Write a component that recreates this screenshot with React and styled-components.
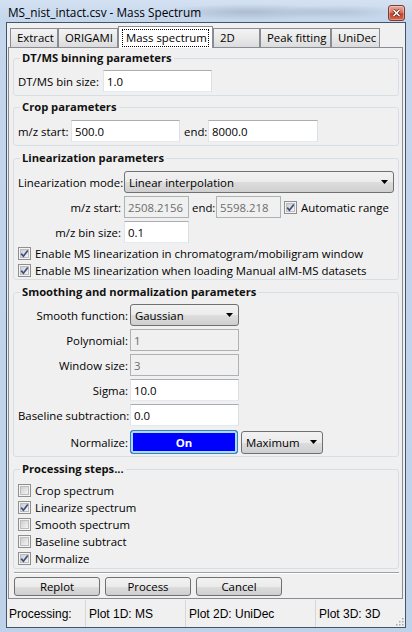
import React from 'react';
import styled, { createGlobalStyle } from 'styled-components';

const UI_FONT = `'Open Sans', 'Noto Sans', sans-serif`;
const FS = '11.4px';

const GlobalStyle = createGlobalStyle`
  html, body {
    margin: 0;
    padding: 0;
  }
  body {
    width: 412px;
    height: 632px;
    overflow: hidden;
    font-family: ${UI_FONT};
    font-size: ${FS};
    color: #000;
  }
  * {
    box-sizing: border-box;
  }
`;

const Window = styled.div`
  width: 412px;
  height: 632px;
  display: flex;
  flex-direction: column;
  padding: 0 6px 4px 6px;
  background:
    radial-gradient(ellipse 90px 8px at 250px 12px, rgba(120, 130, 145, 0.35), transparent),
    radial-gradient(ellipse 60px 7px at 340px 12px, rgba(120, 130, 145, 0.25), transparent),
    linear-gradient(to bottom, #d3e1f2 0, #c3d6ec 22px, #bed2ea 100%);
`;

const TitleBar = styled.div`
  height: 22px;
  flex: none;
  display: flex;
  align-items: flex-start;
  justify-content: space-between;
  padding: 4px 1px 0 2px;
`;

const TitleText = styled.span`
  font-size: 11.8px;
  line-height: 16px;
  color: #000;
`;

const CloseButton = styled.div`
  width: 17px;
  height: 16px;
  margin-top: 1px;
  border: 1px solid #7b3b32;
  border-radius: 3px;
  background: linear-gradient(to bottom, #e9a99a 0, #d97763 45%, #c4422b 55%, #d2664c 100%);
  box-shadow: inset 0 0 0 1px rgba(255, 255, 255, 0.35);
  display: flex;
  align-items: center;
  justify-content: center;
`;

const Client = styled.div`
  flex: 1;
  display: flex;
  flex-direction: column;
  background: #f0f0f0;
  border: 1px solid #44546a;
`;

const Notebook = styled.div`
  flex: 1;
  display: flex;
  flex-direction: column;
  margin: 3px 2px 1px 1px;
`;

const TabStrip = styled.div`
  height: 21px;
  flex: none;
  display: flex;
  align-items: flex-end;
  padding-left: 2px;
`;

const Tab = styled.div`
  position: relative;
  width: ${p => p.$w}px;
  height: ${p => (p.$active ? 22 : 19)}px;
  margin-bottom: ${p => (p.$active ? -1 : 0)}px;
  padding: ${p => (p.$active ? '2px 3px 0 3px' : '1px 0 0 6px')};
  border: 1px solid #898c95;
  border-bottom: none;
  background: ${p =>
    p.$active ? '#ffffff' : 'linear-gradient(to bottom, #f3f3f3 0, #e9e9e9 50%, #dcdcdc 100%)'};
  font-size: ${FS};
  line-height: 16px;
  white-space: nowrap;
`;

const FocusRect = styled.span`
  display: block;
  border: 1px dotted #000;
  padding: 0 3px;
  text-align: center;
`;

const Page = styled.div`
  flex: 1;
  display: flex;
  flex-direction: column;
  border: 1px solid #898c95;
  padding: 2px 3px 0 4px;
`;

const GroupBox = styled.fieldset`
  margin: ${p => p.$mt || 0}px 0 0 0;
  padding: ${p => p.$pt || 4}px 4px ${p => p.$pb || 0}px 4px;
  border: 1px solid #d5dfe5;
  border-radius: 3px;
  min-width: 0;
`;

const Legend = styled.legend`
  margin-left: 2px;
  padding: 0 2px;
  font-weight: 700;
  font-size: 11.2px;
  line-height: 16px;
  color: #111;
`;

const Rows = styled.div`
  display: flex;
  flex-direction: column;
  gap: ${p => p.$gap || 0}px;
  margin-top: ${p => p.$mt || 0}px;
`;

const Row = styled.div`
  display: flex;
  align-items: center;
  height: ${p => p.$h || 22}px;
`;

const Label = styled.span`
  flex: none;
  width: ${p => p.$w}px;
  text-align: ${p => p.$align || 'left'};
  padding-right: ${p => p.$pr || 0}px;
  padding-left: ${p => p.$pl || 0}px;
  font-size: ${FS};
  white-space: nowrap;
`;

const TextInput = styled.input`
  flex: none;
  width: ${p => p.$w}px;
  height: 22px;
  margin: 0;
  padding: 0 0 0 3px;
  border: 1px solid;
  border-color: ${p => (p.disabled ? '#adb2b5' : '#abadb3 #dbdfe6 #e3e9ef #e2e3ea')};
  background: ${p => (p.disabled ? '#f0f0f0' : '#ffffff')};
  color: ${p => (p.disabled ? '#6d6d6d' : '#000')};
  font-family: ${UI_FONT};
  font-size: ${FS};
  outline: none;
`;

const Dropdown = styled.div`
  flex: none;
  width: ${p => p.$w}px;
  height: ${p => p.$h || 22}px;
  display: flex;
  align-items: center;
  justify-content: space-between;
  padding: 0 5px 0 4px;
  border: 1px solid #707070;
  border-radius: 3px;
  background: linear-gradient(to bottom, #f2f2f2 0, #ebebeb 50%, #dddddd 51%, #cfcfcf 100%);
  font-size: ${FS};
  white-space: nowrap;
`;

const Toggle = styled.div`
  flex: none;
  width: ${p => p.$w}px;
  height: 24px;
  display: flex;
  align-items: center;
  justify-content: center;
  border: 1px solid #3c7fb1;
  border-radius: 3px;
  background: #0000ff;
  box-shadow: inset 0 0 0 2px #a8dcf6;
  color: #fff;
  font-weight: 700;
  font-size: ${FS};
`;

const CheckRow = styled.label`
  display: flex;
  align-items: center;
  height: 17px;
  gap: 4px;
  font-size: ${FS};
  white-space: nowrap;
  margin-left: ${p => p.$ml || 0}px;
`;

const Separator = styled.div`
  margin: 3px 0 0 1px;
  height: 2px;
  border-top: 1px solid #a0a0a0;
  border-bottom: 1px solid #ffffff;
`;

const ButtonRow = styled.div`
  display: flex;
  gap: 5px;
  margin: 3px 0 0 1px;
`;

const Button = styled.div`
  width: 86px;
  height: 19px;
  display: flex;
  align-items: center;
  justify-content: center;
  border: 1px solid #707070;
  border-radius: 3px;
  background: linear-gradient(to bottom, #f2f2f2 0, #ebebeb 50%, #dddddd 51%, #cfcfcf 100%);
  font-size: ${FS};
`;

const StatusBar = styled.div`
  height: 27px;
  flex: none;
  display: flex;
  align-items: center;
  font-family: 'Liberation Sans', Arial, sans-serif;
  font-size: 12px;
  position: relative;
`;

const StatusField = styled.div`
  width: ${p => p.$w}px;
  height: 100%;
  flex: none;
  display: flex;
  align-items: center;
  padding-left: ${p => p.$pl || 3}px;
  border-right: ${p => (p.$last ? 'none' : '1px solid #d7d7d7')};
`;

const Grip = styled.svg`
  position: absolute;
  right: 1px;
  bottom: 1px;
`;

const Check = ({ checked }) => (
  <svg width="13" height="13" viewBox="0 0 13 13">
    <defs>
      <linearGradient id="cbg" x1="0" y1="0" x2="1" y2="1">
        <stop offset="0" stopColor="#cbcbcb" />
        <stop offset="1" stopColor="#f7f7f7" />
      </linearGradient>
    </defs>
    <rect x="0.5" y="0.5" width="12" height="12" fill="#f4f4f4" stroke="#8f8f8f" />
    <rect x="2.5" y="2.5" width="8" height="8" fill="url(#cbg)" stroke="#bdbdbd" />
    {checked && (
      <path d="M3.2 6.6 L5.4 9.2 L9.8 3.4" fill="none" stroke="#3b4f83" strokeWidth="1.7" />
    )}
  </svg>
);

const Arrow = () => (
  <svg width="7" height="4" viewBox="0 0 7 4">
    <path d="M0 0 H7 L3.5 4 Z" fill="#000" />
  </svg>
);

const tabs = [
  { name: 'Extract', w: 48 },
  { name: 'ORIGAMI', w: 60 },
  { name: 'Mass spectrum', w: 95, active: true },
  { name: '2D', w: 47 },
  { name: 'Peak fitting', w: 71 },
  { name: 'UniDec', w: 49 },
];

const steps = [
  { name: 'Crop spectrum', checked: false },
  { name: 'Linearize spectrum', checked: true },
  { name: 'Smooth spectrum', checked: false },
  { name: 'Baseline subtract', checked: false },
  { name: 'Normalize', checked: true },
];

const App = () => {
  return (
    <Window>
      <GlobalStyle />
      <TitleBar>
        <TitleText>MS_nist_intact.csv - Mass Spectrum</TitleText>
        <CloseButton>
          <svg width="9" height="8" viewBox="0 0 9 8">
            <path d="M1.5 1 L7.5 7 M7.5 1 L1.5 7" stroke="#5a1f16" strokeWidth="3" />
            <path d="M1.5 1 L7.5 7 M7.5 1 L1.5 7" stroke="#ffffff" strokeWidth="1.6" />
          </svg>
        </CloseButton>
      </TitleBar>
      <Client>
        <Notebook>
          <TabStrip>
            {tabs.map(t => (
              <Tab key={t.name} $w={t.w} $active={t.active}>
                {t.active ? <FocusRect>{t.name}</FocusRect> : t.name}
              </Tab>
            ))}
          </TabStrip>
          <Page>
            <GroupBox $pt={4} $pb={3}>
              <Legend>DT/MS binning parameters</Legend>
              <Row>
                <Label $w={85}>DT/MS bin size:</Label>
                <TextInput $w={109} defaultValue="1.0" />
              </Row>
            </GroupBox>

            <GroupBox $mt={3} $pt={5} $pb={3}>
              <Legend>Crop parameters</Legend>
              <Row>
                <Label $w={53}>m/z start:</Label>
                <TextInput $w={109} defaultValue="500.0" />
                <Label $w={28} $pl={4}>end:</Label>
                <TextInput $w={110} defaultValue="8000.0" />
              </Row>
            </GroupBox>

            <GroupBox $mt={4} $pt={5} $pb={0}>
              <Legend>Linearization parameters</Legend>
              <Rows $gap={3}>
                <Row>
                  <Label $w={106}>Linearization mode:</Label>
                  <Dropdown $w={270}>
                    <span>Linear interpolation</span>
                    <Arrow />
                  </Dropdown>
                </Row>
                <Row>
                  <Label $w={106} $align="right" $pr={3}>m/z start:</Label>
                  <TextInput $w={65} disabled defaultValue="2508.2156" />
                  <Label $w={27} $pl={3}>end:</Label>
                  <TextInput $w={65} disabled defaultValue="5598.218" />
                  <CheckRow $ml={3}>
                    <Check checked />
                    Automatic range
                  </CheckRow>
                </Row>
                <Row>
                  <Label $w={106} $align="right" $pr={3}>m/z bin size:</Label>
                  <TextInput $w={65} defaultValue="0.1" />
                </Row>
              </Rows>
              <Rows $mt={2}>
                <CheckRow>
                  <Check checked />
                  Enable MS linearization in chromatogram/mobiligram window
                </CheckRow>
                <CheckRow>
                  <Check checked />
                  Enable MS linearization when loading Manual aIM-MS datasets
                </CheckRow>
              </Rows>
            </GroupBox>

            <GroupBox $mt={4} $pt={4} $pb={2}>
              <Legend>Smoothing and normalization parameters</Legend>
              <Rows $gap={3}>
                <Row>
                  <Label $w={112} $align="right" $pr={2}>Smooth function:</Label>
                  <Dropdown $w={109}>
                    <span>Gaussian</span>
                    <Arrow />
                  </Dropdown>
                </Row>
                <Row>
                  <Label $w={112} $align="right" $pr={2}>Polynomial:</Label>
                  <TextInput $w={109} disabled defaultValue="1" />
                </Row>
                <Row>
                  <Label $w={112} $align="right" $pr={2}>Window size:</Label>
                  <TextInput $w={109} disabled defaultValue="3" />
                </Row>
                <Row>
                  <Label $w={112} $align="right" $pr={2}>Sigma:</Label>
                  <TextInput $w={109} defaultValue="10.0" />
                </Row>
                <Row>
                  <Label $w={112} $align="right" $pr={2}>Baseline subtraction:</Label>
                  <TextInput $w={109} defaultValue="0.0" />
                </Row>
                <Row $h={24} style={{ marginTop: 1 }}>
                  <Label $w={112} $align="right" $pr={2}>Normalize:</Label>
                  <Toggle $w={108}>On</Toggle>
                  <Dropdown $w={82} $h={23} style={{ marginLeft: 3 }}>
                    <span>Maximum</span>
                    <Arrow />
                  </Dropdown>
                </Row>
              </Rows>
            </GroupBox>

            <GroupBox $mt={4} $pt={5} $pb={1}>
              <Legend>Processing steps...</Legend>
              <Rows>
                {steps.map(s => (
                  <CheckRow key={s.name}>
                    <Check checked={s.checked} />
                    {s.name}
                  </CheckRow>
                ))}
              </Rows>
            </GroupBox>

            <Separator />
            <ButtonRow>
              <Button>Replot</Button>
              <Button>Process</Button>
              <Button>Cancel</Button>
            </ButtonRow>
          </Page>
        </Notebook>
        <StatusBar>
          <StatusField $w={79} $pl={2}>Processing:</StatusField>
          <StatusField $w={100}>Plot 1D: MS</StatusField>
          <StatusField $w={130}>Plot 2D: UniDec</StatusField>
          <StatusField $w={89} $last>Plot 3D: 3D</StatusField>
          <Grip width="10" height="10" viewBox="0 0 10 10">
            {[[8, 2], [8, 5], [5, 5], [8, 8], [5, 8], [2, 8]].map(([x, y]) => (
              <rect key={`${x}-${y}`} x={x} y={y} width="1.5" height="1.5" fill="#a8a8a8" />
            ))}
          </Grip>
        </StatusBar>
      </Client>
    </Window>
  );
};

export default App;
